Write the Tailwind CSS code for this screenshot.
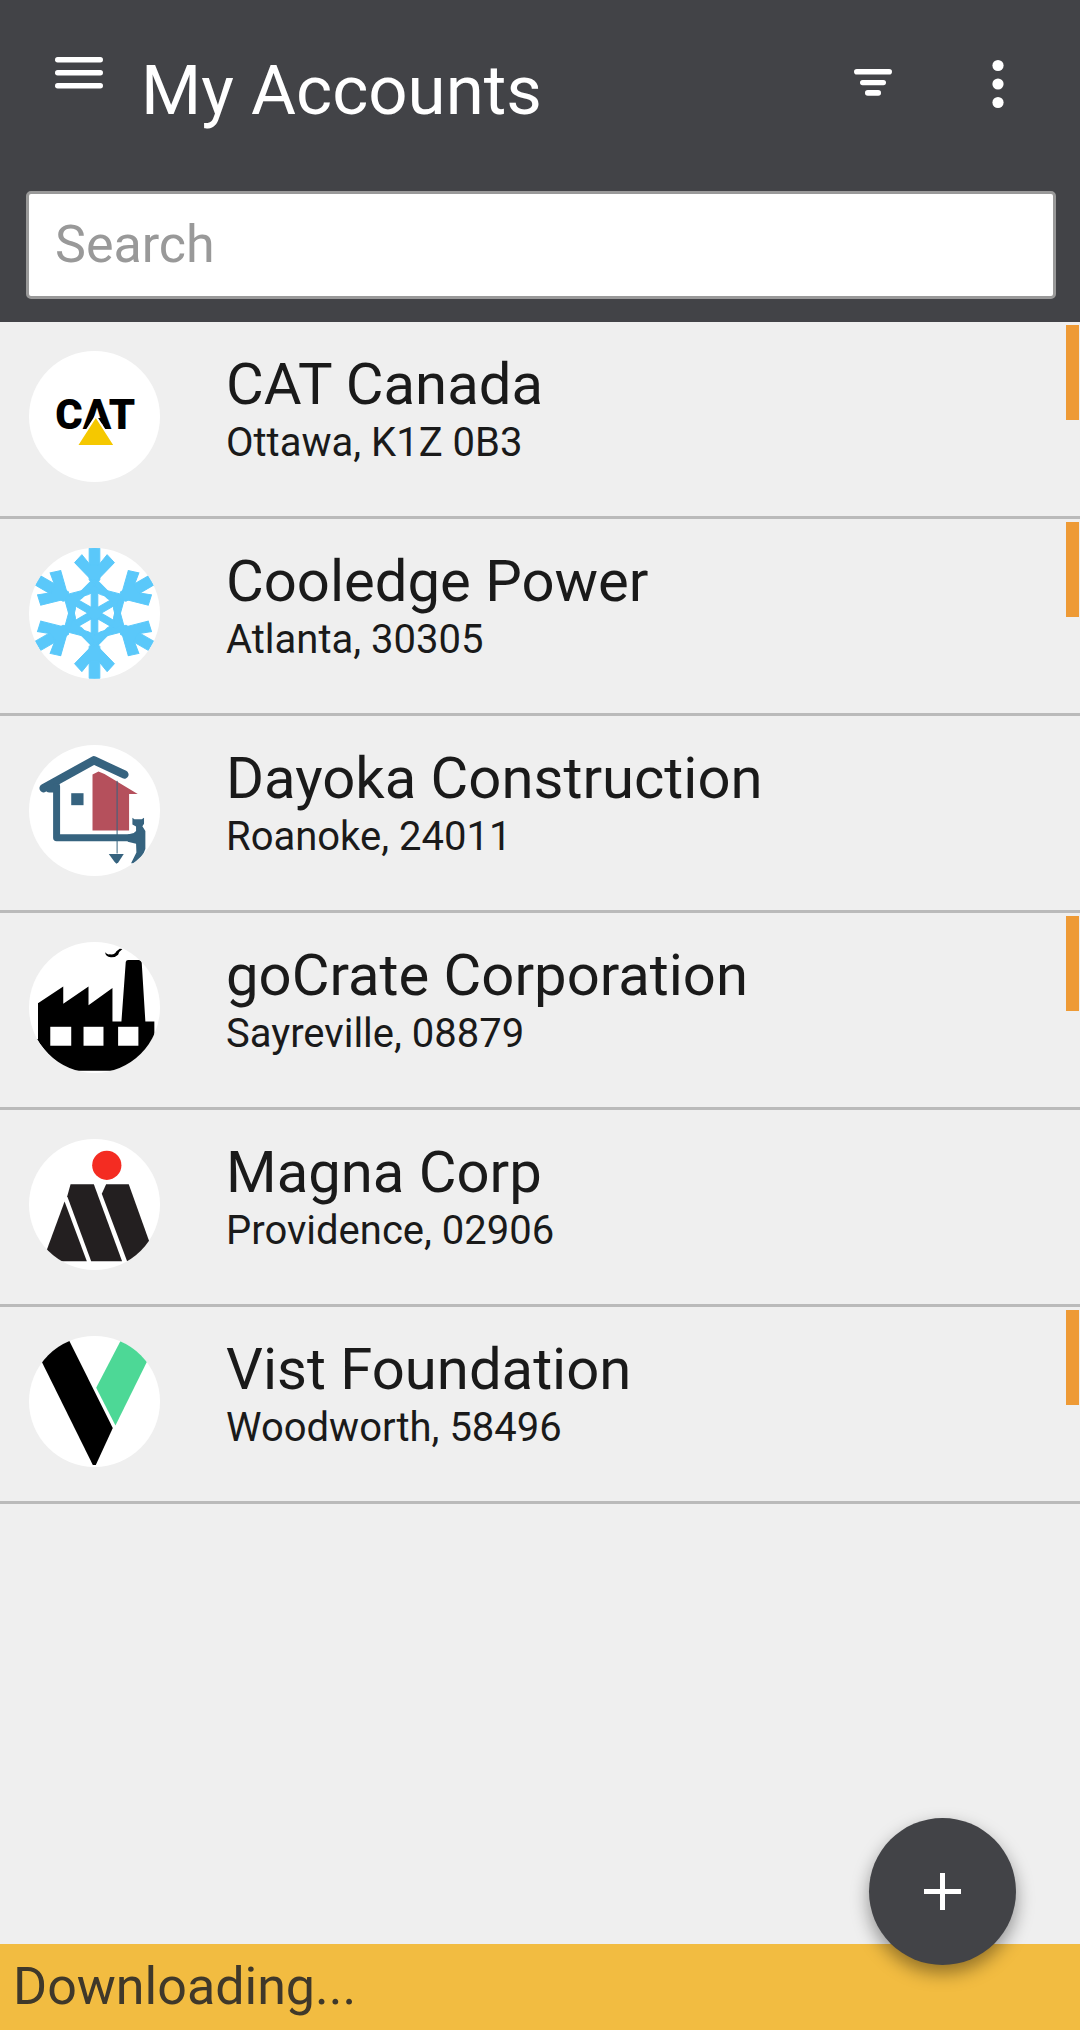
<!DOCTYPE html>
<html lang="en">
<head>
  <meta charset="UTF-8" />
  <meta name="viewport" content="width=device-width, initial-scale=1.0" />
  <title>My Accounts</title>
  <script src="https://cdn.jsdelivr.net/npm/@tailwindcss/browser@4"></script>
</head>
<body class="flex flex-col min-h-screen bg-[#efefef] text-[#1a1a1a] font-['Roboto',sans-serif]">

  <!-- Header -->
  <header class="bg-[#424347] pt-[51px] pb-[23px] pl-[26px] pr-6">
    <div class="flex items-start text-white mb-[60px]">
      <button type="button" aria-label="Menu" class="ml-[29px] mt-[6px]">
        <svg class="block w-12 h-8" viewBox="0 0 48 32" fill="currentColor">
          <rect width="48" height="5.4" rx="2.7" />
          <rect y="13" width="48" height="5.4" rx="2.7" />
          <rect y="26" width="48" height="5.4" rx="2.7" />
        </svg>
      </button>
      <h1 class="flex-1 ml-[38px] text-[69px] leading-[80px]">My Accounts</h1>
      <button type="button" aria-label="Filter" class="mt-[18px]">
        <svg class="block w-[38px] h-7" viewBox="0 0 38 28" fill="currentColor">
          <rect width="38" height="5.6" rx="2.8" />
          <rect x="6" y="11" width="26" height="5.2" rx="2.6" />
          <rect x="11" y="21" width="16" height="5.8" rx="2.8" />
        </svg>
      </button>
      <button type="button" aria-label="More options" class="ml-[100px] mr-[52px] mt-[8px]">
        <svg class="block w-3 h-[50px]" viewBox="0 0 12 50" fill="currentColor">
          <circle cx="6" cy="6.5" r="5.6" />
          <circle cx="6" cy="25" r="5.6" />
          <circle cx="6" cy="43.5" r="5.6" />
        </svg>
      </button>
    </div>
    <input type="search" aria-label="Search" placeholder="Search"
           class="block w-full h-[108px] px-[26px] pb-[2px] bg-white border-3 border-[#999999] rounded-[5px] text-[52px] text-[#1a1a1a] placeholder:text-[#999999]" />
  </header>

  <!-- Account list -->
  <main class="flex-1">
    <ul>
      <li class="relative flex h-[197px] pt-[29px] pl-[29px] border-b-3 border-[#bababa]">
        <svg class="w-[131px] h-[131px] rounded-full bg-white" viewBox="57 62 394 394" role="img" aria-label="CAT logo">
          <text x="256" y="296" text-anchor="middle" font-family="Roboto, sans-serif" font-weight="900" font-size="126">CAT</text>
          <path d="M258 258L316 348H200Z" fill="#f5c800" stroke="#fff" stroke-width="6" />
        </svg>
        <div class="ml-[66px] mt-[3px]">
          <h2 class="text-[58px] leading-[60px]">CAT Canada</h2>
          <p class="text-[40px] leading-[58px]">Ottawa, K1Z 0B3</p>
        </div>
        <span class="absolute top-[3px] right-px w-[13px] h-[95px] bg-[#ee9a35]"></span>
      </li>

      <li class="relative flex h-[197px] pt-[29px] pl-[29px] border-b-3 border-[#bababa]">
        <svg class="w-[131px] h-[131px] rounded-full bg-white" viewBox="57 54 394 394" role="img" aria-label="Cooledge Power logo">
          <defs>
            <g id="flake-arm">
              <path d="M238 54H270V150L264 156V250H244V156L238 150Z" />
              <path d="M254 160L194 98L216 74L242 106H266L292 74L314 98Z" />
              <path d="M254 150L276 178L330 192V208L310 205L272 194L254 184L236 194L198 205L178 208V192L232 178Z" />
            </g>
          </defs>
          <g fill="#5ac8fa" stroke="#5ac8fa" stroke-width="3">
            <use href="#flake-arm" />
            <use href="#flake-arm" transform="rotate(60 254 250)" />
            <use href="#flake-arm" transform="rotate(120 254 250)" />
            <use href="#flake-arm" transform="rotate(180 254 250)" />
            <use href="#flake-arm" transform="rotate(240 254 250)" />
            <use href="#flake-arm" transform="rotate(300 254 250)" />
            <circle cx="254" cy="250" r="20" />
          </g>
        </svg>
        <div class="ml-[66px] mt-[3px]">
          <h2 class="text-[58px] leading-[60px]">Cooledge Power</h2>
          <p class="text-[40px] leading-[58px]">Atlanta, 30305</p>
        </div>
        <span class="absolute top-[3px] right-px w-[13px] h-[95px] bg-[#ee9a35]"></span>
      </li>

      <li class="relative flex h-[197px] pt-[29px] pl-[29px] border-b-3 border-[#bababa]">
        <svg class="w-[131px] h-[131px] rounded-full bg-white" viewBox="57 59 394 394" role="img" aria-label="Dayoka Construction logo">
          <path d="M248 148L266 139L284 146L384 206H358V316H248Z" fill="#b5505c" />
          <g fill="none" stroke="#36637f" stroke-linecap="round" stroke-linejoin="round">
            <path d="M101 189L252 105L344 148" stroke-width="25" />
            <path d="M140 184V338H362" stroke-width="21" />
            <path d="M118 192H140" stroke-width="20" />
            <path d="M322 168V384" stroke-width="3" />
          </g>
          <g fill="#36637f">
            <rect x="184" y="204" width="37" height="36" />
            <path d="M297 387H342L326 412L320 416L314 410Z" />
            <path d="M368 278L374 282H396L403 278V296L398 303L407 318V372Q400 396 372 415H364L380 382L379 356L354 350V328L372 324L379 318V304L368 298Z" />
          </g>
        </svg>
        <div class="ml-[66px] mt-[3px]">
          <h2 class="text-[58px] leading-[60px]">Dayoka Construction</h2>
          <p class="text-[40px] leading-[58px]">Roanoke, 24011</p>
        </div>
      </li>

      <li class="relative flex h-[197px] pt-[29px] pl-[29px] border-b-3 border-[#bababa]">
        <svg class="w-[131px] h-[131px] rounded-full bg-white" viewBox="57 60 394 394" role="img" aria-label="goCrate Corporation logo">
          <path d="M84 244L160 194V246L236 194V250L308 198V299H335L348 120Q349 114 355 114H388Q395 115 396 122L407 299H434V348Q395 420 320 447H184Q125 420 80 352H84Z" />
          <path d="M286 91Q292 99 300 97Q316 99 320 88L330 80L338 81Q327 89 325 98Q316 107 303 106Q287 104 286 91Z" />
          <g fill="#fff">
            <rect x="121" y="315" width="63" height="57" />
            <rect x="221" y="315" width="60" height="57" />
            <rect x="325" y="315" width="61" height="57" />
          </g>
        </svg>
        <div class="ml-[66px] mt-[3px]">
          <h2 class="text-[58px] leading-[60px]">goCrate Corporation</h2>
          <p class="text-[40px] leading-[58px]">Sayreville, 08879</p>
        </div>
        <span class="absolute top-[3px] right-px w-[13px] h-[95px] bg-[#ee9a35]"></span>
      </li>

      <li class="relative flex h-[197px] pt-[29px] pl-[29px] border-b-3 border-[#bababa]">
        <svg class="w-[131px] h-[131px] rounded-full bg-white" viewBox="57 54 394 394" role="img" aria-label="Magna Corp logo">
          <circle cx="291" cy="133" r="44" fill="#f42c22" />
          <g fill="#231f20">
            <path d="M164 242L231 422H98Z" />
            <path d="M182 190H252L337 422H244L172 226Z" />
            <path d="M289 190H357L440 422H352L276 219Z" />
          </g>
        </svg>
        <div class="ml-[66px] mt-[3px]">
          <h2 class="text-[58px] leading-[60px]">Magna Corp</h2>
          <p class="text-[40px] leading-[58px]">Providence, 02906</p>
        </div>
      </li>

      <li class="relative flex h-[197px] pt-[29px] pl-[29px] border-b-3 border-[#bababa]">
        <svg class="w-[131px] h-[131px] rounded-full bg-white" viewBox="57 59 394 394" role="img" aria-label="Vist Foundation logo">
          <path d="M57 59H171L309 336L258 447H249Z" />
          <path d="M340 59H450L317 328L259 215Z" fill="#4dd896" />
        </svg>
        <div class="ml-[66px] mt-[3px]">
          <h2 class="text-[58px] leading-[60px]">Vist Foundation</h2>
          <p class="text-[40px] leading-[58px]">Woodworth, 58496</p>
        </div>
        <span class="absolute top-[3px] right-px w-[13px] h-[95px] bg-[#ee9a35]"></span>
      </li>
    </ul>
  </main>

  <!-- Sync status -->
  <footer class="relative px-[13px] bg-[#f2bc41] text-[#3f382a]">
    <p role="status" class="text-[52px] leading-[86px]">Downloading...</p>
    <!-- Floating add button -->
    <button type="button" aria-label="Add account"
            class="absolute right-16 bottom-[65px] flex items-center justify-center size-[147px] rounded-full bg-[#424347] text-white shadow-[0_8px_18px_rgba(0,0,0,0.4)]">
      <svg class="w-[37px] h-[37px]" viewBox="0 0 37 37" fill="currentColor">
        <path d="M16 0h5v16h16v5H21v16h-5V21H0v-5h16z" />
      </svg>
    </button>
  </footer>

</body>
</html>
